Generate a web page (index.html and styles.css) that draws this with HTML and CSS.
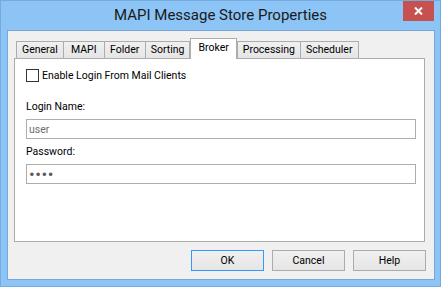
FILE: index.html
```html
<!DOCTYPE html>
<html lang="en">
<head>
    <meta charset="UTF-8">
    <title>MAPI Message Store Properties</title>
    <link rel="stylesheet" href="styles.css">
</head>
<body>
    <div class="window">
        <div class="titlebar">MAPI Message Store Properties</div>
        <button class="close-btn" title="Close">
            <svg width="9" height="8" viewBox="0 0 9 8">
                <path d="M1 0.5 L8 7.5 M8 0.5 L1 7.5" stroke="#fff" stroke-width="2" fill="none"/>
            </svg>
        </button>
        <div class="client">
            <div class="tabs">
                <div class="tab">General</div>
                <div class="tab">MAPI</div>
                <div class="tab">Folder</div>
                <div class="tab">Sorting</div>
                <div class="tab active">Broker</div>
                <div class="tab">Processing</div>
                <div class="tab">Scheduler</div>
            </div>
            <div class="panel">
                <label class="check-row">
                    <span class="checkbox"></span>
                    Enable Login From Mail Clients
                </label>
                <label class="field-label" for="loginName">Login Name:</label>
                <input id="loginName" class="field" type="text" value="user" disabled>
                <label class="field-label second" for="password">Password:</label>
                <input id="password" class="field password" type="password" value="user">
            </div>
            <div class="buttons">
                <button class="btn default">OK</button>
                <button class="btn">Cancel</button>
                <button class="btn">Help</button>
            </div>
        </div>
    </div>
</body>
</html>
```
FILE: styles.css
```css
body {
    margin: 0;
    font-family: Roboto, "Liberation Sans", sans-serif;
    font-size: 10.5px;
    color: #000;
}
.window {
    position: relative;
    width: 441px;
    height: 287px;
    box-sizing: border-box;
    display: flex;
    flex-direction: column;
    background-color: #8cc4f5;
    border: 1px solid #74abe0;
    padding: 0 5px 6px 6px;
}
.titlebar {
    height: 29px;
    line-height: 29px;
    text-align: center;
    font-size: 15px;
    color: #1a1a1a;
    margin-left: -6px;
    margin-right: -5px;
}
.close-btn {
    position: absolute;
    top: 0;
    right: 6px;
    width: 31px;
    height: 20px;
    padding: 0;
    border: none;
    background-color: #c75050;
    display: flex;
    align-items: center;
    justify-content: center;
}
.client {
    flex: 1;
    display: flex;
    flex-direction: column;
    background-color: #f0f0f0;
    border: 1px solid #79a6d6;
    padding: 7px 8px 8px 6px;
}
.tabs {
    display: flex;
    align-items: flex-end;
    height: 20px;
    margin-left: 2px;
}
.tab {
    height: 17px;
    line-height: 16px;
    box-sizing: border-box;
    min-width: 42px;
    padding: 0 5px;
    text-align: center;
    border: 1px solid #acacac;
    border-bottom: none;
    margin-right: -1px;
    background: linear-gradient(#f0f0f0, #e5e5e5);
}
.tab.active {
    position: relative;
    z-index: 1;
    height: 21px;
    line-height: 18px;
    margin-bottom: -1px;
    padding: 0 7px;
    background: #fff;
    margin-left: 1px;
    margin-right: 0;
}
.panel {
    flex: 1;
    display: flex;
    flex-direction: column;
    align-items: flex-start;
    background-color: #fff;
    border: 1px solid #acacac;
    margin-right: 1px;
    padding: 10px 8px 0 11px;
}
.check-row {
    display: flex;
    align-items: center;
    gap: 3px;
    height: 13px;
}
.checkbox {
    width: 13px;
    height: 13px;
    box-sizing: border-box;
    border: 1px solid #333;
    background-color: #fff;
}
.field-label {
    line-height: 13px;
    margin-top: 18px;
    margin-bottom: 6px;
}
.field-label.second {
    margin-top: 6px;
}
.field {
    align-self: stretch;
    height: 20px;
    box-sizing: border-box;
    border: 1px solid #adadad;
    padding: 0 2px;
    margin: 0;
    font-family: inherit;
    font-size: 10.5px;
    color: #000;
    background-color: #fff;
    outline: none;
}
.field:disabled {
    color: #6d6d6d;
}
.field.password {
    font-size: 17px;
    letter-spacing: 0.5px;
    color: #595959;
}
.buttons {
    display: flex;
    justify-content: flex-end;
    gap: 8px;
    margin-top: 8px;
}
.btn {
    width: 73px;
    height: 21px;
    padding: 0;
    font-family: inherit;
    font-size: 10.5px;
    color: #000;
    border: 1px solid #acacac;
    background: linear-gradient(#f0f0f0, #e5e5e5);
}
.btn.default {
    border-color: #3399ff;
}
```
